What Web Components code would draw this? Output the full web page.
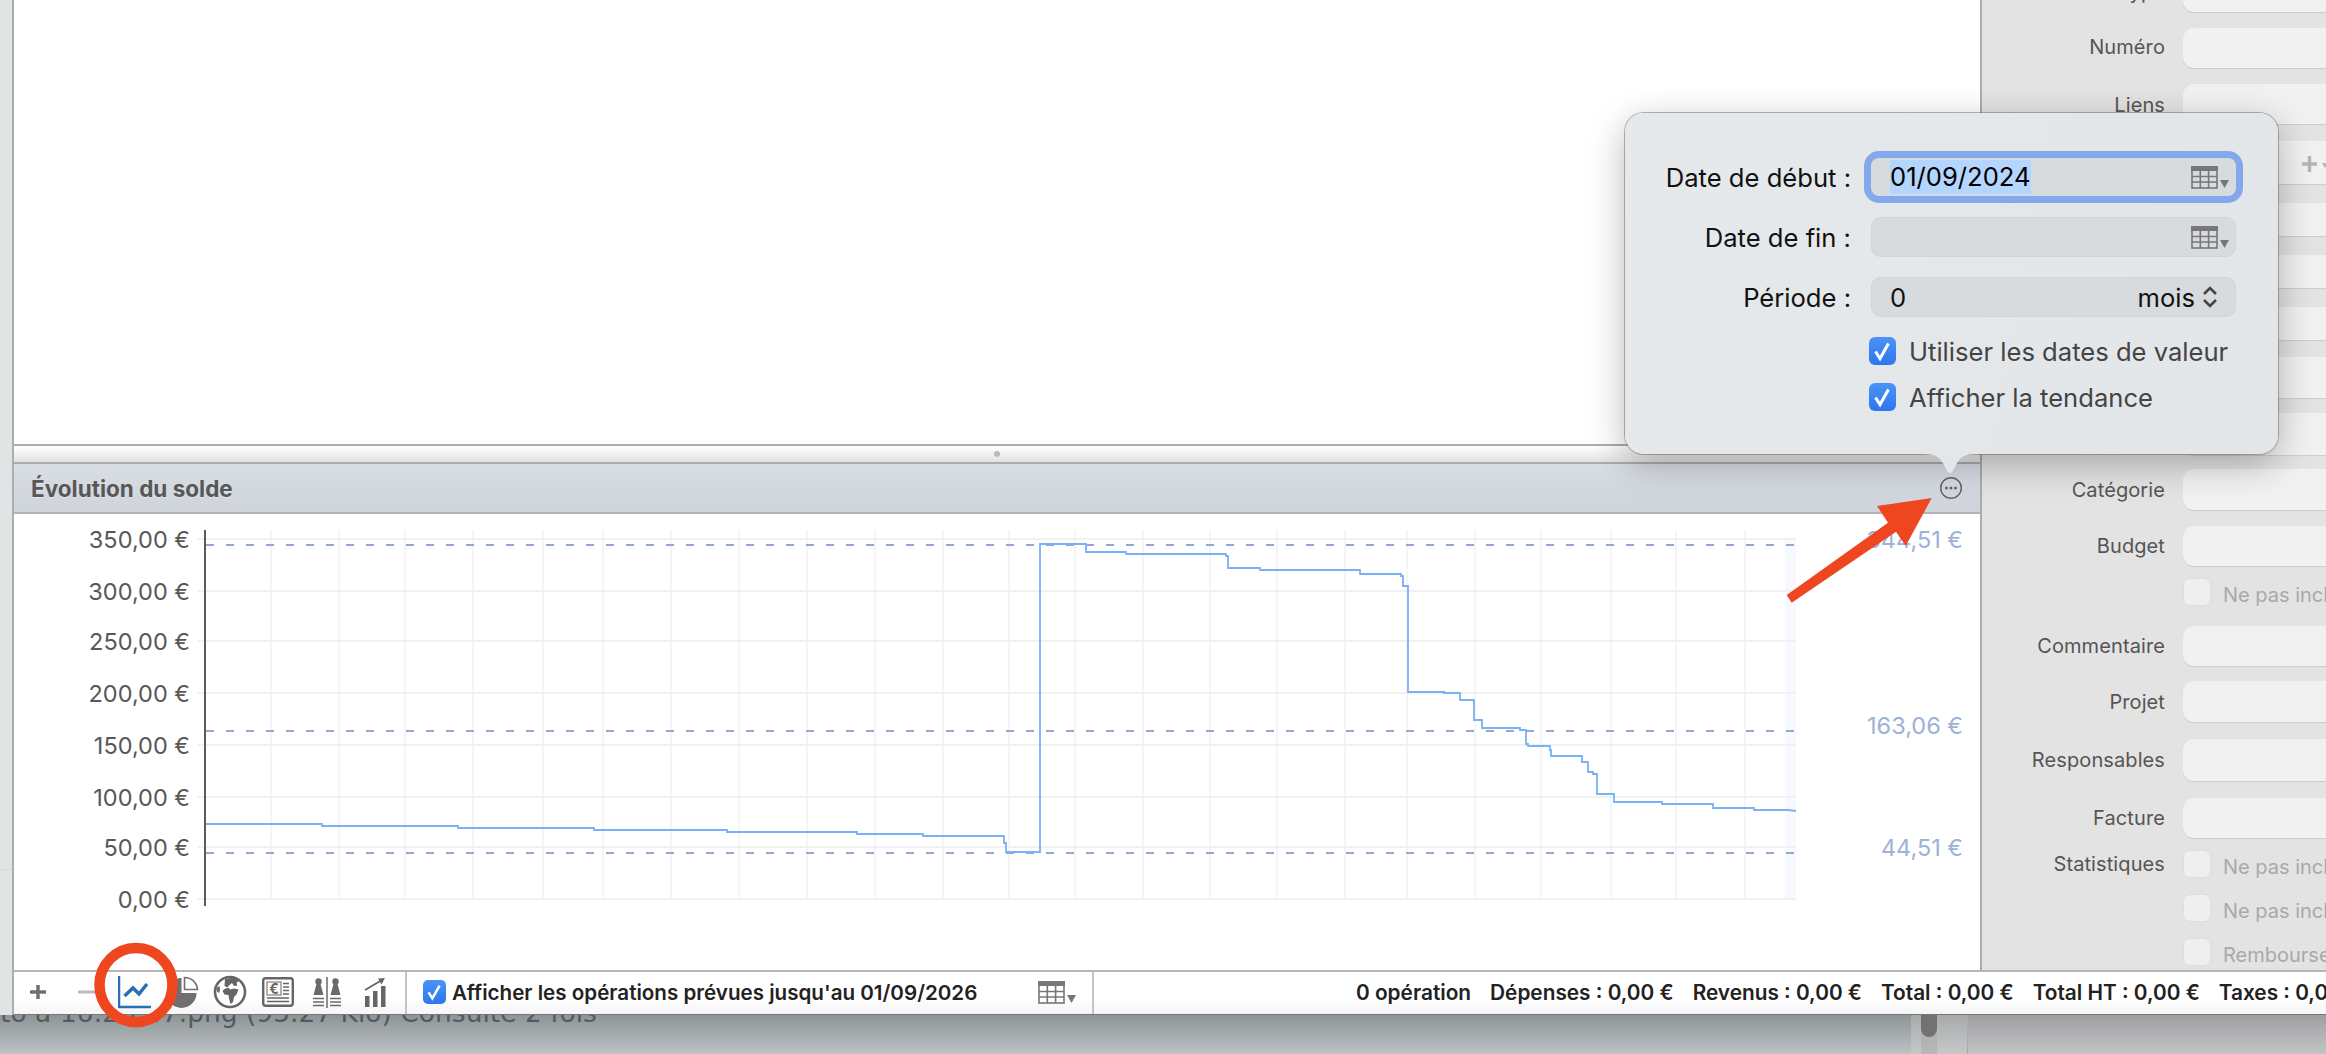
<!DOCTYPE html>
<html lang="fr">
<head>
<meta charset="utf-8">
<title>Évolution du solde</title>
<style>
  html, body { margin: 0; height: 1054px; overflow: hidden; background: #a5a8ab; }
  body { position: relative; font-family: Inter, "Liberation Sans", sans-serif; }
</style>
</head>
<body>
<app-window>
  <side-panel slot="side"></side-panel>
  <balance-chart slot="chart"></balance-chart>
</app-window>
<desk-backdrop></desk-backdrop>
<balance-popover></balance-popover>
<red-marks></red-marks>

<script>
// small calendar button used in the popover and the status bar
class CalIcon extends HTMLElement {
  connectedCallback() {
    this.attachShadow({ mode: 'open' });
    this.shadowRoot.innerHTML = `
      <style>:host { display: inline-flex; } svg { display: block; }</style>
      <svg width="39" height="23" viewBox="0 0 39 23">
        <g fill="none" stroke="#777" stroke-width="1.6">
          <rect x="1" y="1" width="25" height="21"/>
          <path d="M9.300 5v17M17.600 5v17M1 10.500h25M1 16h25"/>
        </g>
        <rect x="0" y="0" width="27" height="5" fill="#777"/>
        <path d="M29 14h9l-4.500 8z" fill="#777"/>
      </svg>`;
  }
}
customElements.define('cal-icon', CalIcon);

class BlueCheck extends HTMLElement {
  connectedCallback() {
    this.attachShadow({ mode: 'open' });
    this.shadowRoot.innerHTML = `
      <style>
        :host { display: block; width: 27px; height: 28px; border-radius: 6px; background: linear-gradient(#4b93f7, #2e76ee); }
        svg { display: block; width: 100%; height: 100%; }
      </style>
      <svg viewBox="0 0 27 28"><path d="M6.500 14.500l4.500 7L19.500 6.500" fill="none" stroke="#fff" stroke-width="3"/></svg>`;
  }
}
customElements.define('blue-check', BlueCheck);

// right column of the window: label + field rows
class SideRow extends HTMLElement {
  connectedCallback() {
    this.attachShadow({ mode: 'open' });
    const label = this.getAttribute('label') || '';
    const h = this.getAttribute('h') || 40;
    const gap = this.getAttribute('gap') || 0;
    const nudge = Number(this.getAttribute('nudge') || 0);
    const check = this.getAttribute('check');
    const right = check !== null
      ? `<div class="chk"><i></i><span>${check}</span></div>`
      : `<div class="field" style="height:${h}px"><slot></slot></div>`;
    this.shadowRoot.innerHTML = `
      <style>
        :host { display: grid; grid-template-columns: 183px 200px; column-gap: 18px; align-items: center; margin-top: ${gap}px; }
        .lab { text-align: right; font-size: 20px; letter-spacing: .1px; color: #555; white-space: nowrap; padding-top: ${Math.max(nudge, 0) * 2}px; padding-bottom: ${Math.max(-nudge, 0) * 2}px; }
        .field { background: #f1f1f1; border-radius: 11px; box-shadow: 0 1px 1px rgba(0,0,0,.1); display: flex; align-items: flex-start; }
        .chk { display: flex; align-items: center; gap: 13px; height: 27px; margin-left: 1px; white-space: nowrap; font-size: 20px; color: #a9a9a9; }
        .chk i { flex: none; width: 26px; height: 26px; border-radius: 6px; background: #efefef; box-shadow: 0 0 0 1px #dedede; }
        .chk span { padding-top: 6px; }
      </style>
      <div class="lab">${label}</div>
      ${right}`;
  }
}
customElements.define('side-row', SideRow);

class SidePanel extends HTMLElement {
  connectedCallback() {
    this.attachShadow({ mode: 'open' });
    this.shadowRoot.innerHTML = `
      <style>
        :host { display: block; height: 100%; overflow: hidden; background: #e3e3e3; border-left: 2px solid #acacac; box-sizing: border-box; }
        .rows { margin-top: -28px; }
        svg { display: block; margin: 15px 0 0 119px; }
      </style>
      <div class="rows">
        <side-row label="Type"></side-row>
        <side-row label="Numéro" gap="16" nudge="-1"></side-row>
        <side-row label="Liens" gap="16" nudge="1"></side-row>
        <side-row gap="17" h="43"><svg width="26" height="16" viewBox="0 0 26 16" fill="#b5b5b5"><path d="M0 6.300h15v3.400H0zM5.800 0h3.400v16H5.800z"/><path d="M20 7h6l-3 5z"/></svg></side-row>
        <side-row gap="19" h="33"></side-row>
        <side-row gap="19" h="33"></side-row>
        <side-row gap="19" h="33"></side-row>
        <side-row gap="17" h="41"></side-row>
        <side-row gap="15" h="42"></side-row>
        <side-row label="Catégorie" gap="14" h="41"></side-row>
        <side-row label="Budget" gap="16"></side-row>
        <side-row gap="12" check="Ne pas inclure"></side-row>
        <side-row label="Commentaire" gap="21"></side-row>
        <side-row label="Projet" gap="15" h="41"></side-row>
        <side-row label="Responsables" gap="17" h="42"></side-row>
        <side-row label="Facture" gap="17"></side-row>
        <side-row label="Statistiques" gap="12" check="Ne pas inclure"></side-row>
        <side-row gap="17" check="Ne pas inclure"></side-row>
        <side-row gap="17" check="Remboursement"></side-row>
      </div>`;
  }
}
customElements.define('side-panel', SidePanel);

class BalanceChart extends HTMLElement {
  connectedCallback() {
    this.attachShadow({ mode: 'open' });
    const ticks = ['350,00 €', '300,00 €', '250,00 €', '200,00 €', '150,00 €', '100,00 €', '50,00 €', '0,00 €'];
    const gridY = [25, 77, 127, 179, 231, 283, 333, 385];
    const gridX = [271, 339, 405, 473, 543, 603, 671, 739, 807, 875, 943, 1009, 1075, 1143, 1210, 1277, 1345, 1407, 1475, 1541, 1611, 1676, 1745];
    const dashes = [[31, '344,51 €', 33], [217, '163,06 €', 219], [339, '44,51 €', 341]];
    // the balance line, in page x and chart y (page y - 514)
    const pts = [[206,310],[322,310],[322,312],[458,312],[458,314],[594,314],[594,316],[727,316],[727,318],[857,318],[857,320],[923,320],[923,322],[1004,322],[1004,329],[1006,329],[1006,338],[1040,338],[1040,30],[1086,30],[1086,38],[1126,38],[1126,40],[1226,40],[1226,42],[1228,42],[1228,54],[1260,54],[1260,56],[1360,56],[1360,60],[1401,60],[1401,62],[1403,62],[1403,72],[1408,72],[1408,178],[1444,178],[1444,179],[1460,179],[1460,186],[1474,186],[1474,206],[1482,206],[1482,214],[1520,214],[1520,216],[1526,216],[1526,230],[1528,230],[1528,232],[1550,232],[1550,236],[1551,236],[1551,242],[1582,242],[1582,248],[1588,248],[1588,258],[1593,258],[1593,260],[1597,260],[1597,280],[1614,280],[1614,288],[1662,288],[1662,290],[1713,290],[1713,294],[1754,294],[1754,296],[1788,296],[1796,297]];
    this.shadowRoot.innerHTML = `
      <style>
        :host { display: block; height: 456px; background: #fff; }
        svg { display: block; }
        text { font-family: Inter, "Liberation Sans", sans-serif; font-size: 23.500px; }
      </style>
      <svg width="1966" height="456" viewBox="14 0 1966 456">
        <rect x="1785" y="25" width="11" height="360" fill="#f8f9fe"/>
        <g stroke="#f2f2f2" stroke-width="1.500" fill="none">
          ${gridX.map(x => `<path d="M${x} 16V385"/>`).join('')}
        </g>
        <g stroke="#f1f1f1" stroke-width="2" fill="none">
          ${gridY.map(y => `<path d="M198 ${y}H1796"/>`).join('')}
        </g>
        <g fill="#585858" text-anchor="end">
          ${ticks.map((t, i) => `<text x="190" y="${gridY[i] + 9}">${t}</text>`).join('')}
        </g>
        <path d="M205 16V392" stroke="#5a5a5a" stroke-width="2" fill="none"/>
        ${dashes.map(d => `<path d="M206 ${d[0]}H1796" stroke="#93a8d0" stroke-width="2" stroke-dasharray="8 12" fill="none"/>`).join('')}
        <polyline points="${pts.map(p => p.join(',')).join(' ')}" fill="none" stroke="#79b1f7" stroke-width="1.800"/>
        <g fill="#9cb2d6" text-anchor="end">
          ${dashes.map(d => `<text x="1963" y="${d[2] + 1}">${d[1]}</text>`).join('')}
        </g>
      </svg>`;
  }
}
customElements.define('balance-chart', BalanceChart);

class StatusBar extends HTMLElement {
  connectedCallback() {
    this.attachShadow({ mode: 'open' });
    this.shadowRoot.innerHTML = `
      <style>
        :host { display: flex; align-items: stretch; height: 45px; box-sizing: border-box; background: linear-gradient(#fff 60%, #f5f5f5); border-top: 2px solid #b6b6b6; border-bottom: 1px solid #777; overflow: hidden; color: #222; font-size: 20.800px; font-weight: 600; white-space: nowrap; }
        svg { display: block; flex: none; }
        .tools { width: 391px; flex: none; display: flex; align-items: center; padding-bottom: 2px; box-sizing: border-box; }
        .sep { flex: none; width: 2px; background: #c4c4c4; }
        .plan { width: 685px; flex: none; display: flex; align-items: center; box-sizing: border-box; padding: 0 0 2px 16px; }
        .plan span { margin-left: 6px; width: 529px; flex: none; font-size: 20.600px; }
        .plan cal-icon { margin-left: 57px; }
        .plan blue-check { width: 23px; height: 24px; flex: none; border-radius: 5px; }
        .sum { display: flex; align-items: center; gap: 19px; padding: 0 0 2px 262px; }
      </style>
      <div class="tools">
        <svg style="margin-left:16px" width="16" height="14" viewBox="0 0 16 14"><path d="M0 7h16M8 0v14" stroke="#707070" stroke-width="3.500"/></svg>
        <svg style="margin-left:32px" width="18" height="4" viewBox="0 0 18 4"><path d="M0 2h18" stroke="#bbb" stroke-width="3"/></svg>
        <svg style="margin-left:22px" width="33" height="33" viewBox="0 0 33 33" fill="none" stroke="#2a6db5"><path d="M1 0V31H33" stroke-width="2.500"/><path d="M6.500 20L15 12l6 6L29 8" stroke-width="3.500"/></svg>
        <svg style="margin-left:15px" width="34" height="33" viewBox="0 0 34 33"><path d="M15.500 2A15 15 0 1 0 30.500 17H15.500Z" fill="#6f6f6f"/><path d="M18.500 1.500V13.500H31.500A13 13 0 0 0 18.500 1.500Z" fill="#fff" stroke="#6f6f6f" stroke-width="1.600"/></svg>
        <svg style="margin-left:13px" width="34" height="34" viewBox="0 0 34 34"><circle cx="17" cy="17" r="15" fill="#fff" stroke="#666" stroke-width="2.600"/><path d="M12 4l9-1.500 5 3-2.500 2.500 1 2.500-3.500.500-2-3-3 2.500-1.500 2-3-1.500zM9.500 16c1-2 4-3.500 6-3l2 1.500 3-1 5 1-2 5-2.500 2.500-1 5-2.500 2-1.500-5.500-.500-3.500-4-.500zM3.500 13l3-2 .500 4-1 3-2-1.500z" fill="#666"/></svg>
        <svg style="margin-left:15px" width="32" height="30" viewBox="0 0 32 30"><rect x="1.200" y="1.200" width="29.600" height="27.600" rx="2.500" fill="none" stroke="#666" stroke-width="2.400"/><rect x="5" y="5" width="14" height="13" fill="none" stroke="#666" stroke-width="1"/><text x="12" y="16.500" text-anchor="middle" font-size="14" font-weight="700" fill="#666" font-family="Inter, sans-serif">€</text><path d="M21 6.500h6M21 10h6M21 13.500h6M21 17h6M5 21h22M5 24.500h22" stroke="#666" stroke-width="1.600"/></svg>
        <svg style="margin-left:18px" width="30" height="31" viewBox="0 0 30 31"><circle cx="6.500" cy="4.500" r="3.200" fill="#6a6a6a"/><path d="M4.500 7h4L11.500 18h-10zM21.500 7h4L28.500 18h-10z" fill="#6a6a6a"/><circle cx="23.500" cy="4.500" r="3.200" fill="#6a6a6a"/><path d="M15 0v31" stroke="#6a6a6a" stroke-width="1.500"/><path d="M1 21.500h11M1 25h11M1 28.500h11M18 21.500h11M18 25h11M18 28.500h11" stroke="#6a6a6a" stroke-width="1.500"/></svg>
        <svg style="margin-left:22px" width="22" height="30" viewBox="0 0 22 30"><path d="M1 19h4.500v11H1zM9 14h4.500v16H9zM17 9h4.500v21H17z" fill="#666"/><path d="M1 13L18 3" stroke="#666" stroke-width="1.800"/><path d="M21 1l-7 .500 3.500 6z" fill="#666"/></svg>
      </div>
      <div class="sep"></div>
      <div class="plan">
        <blue-check></blue-check>
        <span>Afficher les opérations prévues jusqu'au 01/09/2026</span>
        <cal-icon></cal-icon>
      </div>
      <div class="sep"></div>
      <div class="sum">
        <span>0 opération</span><span>Dépenses : 0,00 €</span><span>Revenus : 0,00 €</span><span>Total : 0,00 €</span><span>Total HT : 0,00 €</span><span>Taxes : 0,00 €</span>
      </div>`;
  }
}
customElements.define('status-bar', StatusBar);

class AppWindow extends HTMLElement {
  connectedCallback() {
    this.attachShadow({ mode: 'open' });
    this.shadowRoot.innerHTML = `
      <style>
        :host { display: grid; grid-template-columns: 14px 1fr; height: 1015px; position: relative; z-index: 1; overflow: hidden; }
        .strip { background: linear-gradient(#e0e4e4 869px, #d6d9d9 869px, #d6d9d9 870px, #e0e4e4 870px); border-right: 2px solid #adadad; box-sizing: border-box; }
        .right { display: flex; flex-direction: column; min-width: 0; }
        .upper { display: grid; grid-template-columns: 1966px 1fr; height: 970px; }
        .main { display: flex; flex-direction: column; min-width: 0; }
        .sheet { height: 444px; background: #fff; }
        .split { height: 16px; display: flex; align-items: center; justify-content: center; border-top: 2px solid #acacac; border-bottom: 2px solid #acacac; background: linear-gradient(#fff, #e2e2e2); }
        .split i { width: 6px; height: 6px; border-radius: 50%; background: #bbb; }
        .head { height: 48px; display: flex; align-items: center; justify-content: space-between; padding: 0 17px; border-bottom: 2px solid #b1b4b7; background: linear-gradient(#d9dee5, #cfd4db); }
        .head b { font-size: 22.500px; font-weight: 700; color: #575757; text-shadow: 0 1px 0 rgba(255,255,255,.4); }
        svg { display: block; }
      </style>
      <div class="strip"></div>
      <div class="right">
        <div class="upper">
          <div class="main">
            <div class="sheet"></div>
            <div class="split"><i></i></div>
            <div class="head">
              <b>Évolution du solde</b>
              <svg width="24" height="24" viewBox="0 0 24 24"><circle cx="12" cy="12" r="10.300" fill="none" stroke="#666" stroke-width="1.500"/><circle cx="7.500" cy="12" r="1.500" fill="#666"/><circle cx="12" cy="12" r="1.500" fill="#666"/><circle cx="16.500" cy="12" r="1.500" fill="#666"/></svg>
            </div>
            <slot name="chart"></slot>
          </div>
          <slot name="side"></slot>
        </div>
        <status-bar></status-bar>
      </div>`;
  }
}
customElements.define('app-window', AppWindow);

// what shows of the browser and desktop under the window
class DeskBackdrop extends HTMLElement {
  connectedCallback() {
    this.attachShadow({ mode: 'open' });
    this.shadowRoot.innerHTML = `
      <style>
        :host { display: grid; grid-template-columns: 1911px 56px 1fr; height: 56px; margin-top: -17px; overflow: hidden; }
        .page { background: linear-gradient(#8f9497 17px, #bcc2c5); overflow: hidden; }
        .page div { white-space: nowrap; font: 26.500px/30px "DejaVu Sans", sans-serif; color: #555a5e; }
        .scroll { background: linear-gradient(#a9aaab 17px, #c6c7c8); display: flex; padding-left: 10px; }
        .track { width: 16px; background: linear-gradient(#a5a5a5, #b7b7b7); }
        .track i { display: block; width: 16px; height: 39px; border-radius: 0 0 8px 8px; background: #727272; }
        .rest { border-left: 1px solid #a9acae; background: linear-gradient(#9f9fa1 17px, #c3c4c6); }
      </style>
      <div class="page"><div>to à 16:20:47.png (95.27 Kio) Consulté 2 fois</div></div>
      <div class="scroll"><div class="track"><i></i></div></div>
      <div class="rest"></div>`;
  }
}
customElements.define('desk-backdrop', DeskBackdrop);

class BalancePopover extends HTMLElement {
  connectedCallback() {
    this.attachShadow({ mode: 'open' });
    this.shadowRoot.innerHTML = `
      <style>
        :host { position: absolute; left: 1625px; top: 113px; width: 653px; height: 341px; box-sizing: border-box; z-index: 2; background: linear-gradient(100deg, #e6e9ec, #e3e6e9); border-radius: 19px; box-shadow: 0 0 0 1px rgba(90,90,90,.45), 0 10px 36px rgba(0,0,0,.28); color: #111; font-size: 25.600px; }
        .form { display: grid; grid-template-columns: 226px 365px; column-gap: 20px; row-gap: 20px; padding-top: 44px; align-items: center; }
        .lab { text-align: right; white-space: nowrap; }
        .box { height: 40px; box-sizing: border-box; border-radius: 10px; background: #d8dbde; box-shadow: inset 0 0 0 1px #d2d5d8; display: flex; align-items: center; padding: 0 6px 0 19px; }
        .box.focus { height: 38px; box-shadow: 0 0 0 7px #83a8ec; border-radius: 8px; margin: 1px 0; }
        .sel { background: #b4d5fe; color: #000; line-height: 34px; }
        .grow { flex: 1; }
        .checks { grid-column: 2; display: flex; flex-direction: column; gap: 18px; margin: 0 0 0 -2px; color: #444; }
        .checks div { display: flex; align-items: center; gap: 13px; height: 28px; white-space: nowrap; }
        .tip { position: absolute; left: 297px; top: 340px; display: block; }
        .mois { margin-right: 7px; }
      </style>
      <div class="form">
        <div class="lab">Date de début :</div>
        <div class="box focus"><span class="sel">01/09/2024</span><span class="grow"></span><cal-icon></cal-icon></div>
        <div class="lab">Date de fin :</div>
        <div class="box"><span class="grow"></span><cal-icon></cal-icon></div>
        <div class="lab">Période :</div>
        <div class="box"><span>0</span><span class="grow"></span><span class="mois">mois</span>
          <svg width="16" height="24" viewBox="0 0 16 24" style="margin-right:12px" fill="none" stroke="#444" stroke-width="2.600"><path d="M2 9l6-6 6 6M2 15l6 6 6-6"/></svg></div>
        <div class="checks">
          <div><blue-check></blue-check>Utiliser les dates de valeur</div>
          <div><blue-check></blue-check>Afficher la tendance</div>
        </div>
      </div>
      <svg class="tip" width="56" height="22" viewBox="0 0 56 22"><path d="M0 1C14 1 18 4 22 12c3 6 4 8 6 8s3-2 6-8C38 4 42 1 56 1Z" fill="#e4e7ea"/></svg>`;
  }
}
customElements.define('balance-popover', BalancePopover);

// red annotations drawn on top of the screenshot
class RedMarks extends HTMLElement {
  connectedCallback() {
    this.attachShadow({ mode: 'open' });
    this.shadowRoot.innerHTML = `
      <style>:host { position: absolute; left: 0; top: 0; z-index: 3; pointer-events: none; } svg { display: block; }</style>
      <svg width="2326" height="1054" viewBox="0 0 2326 1054">
        <ellipse cx="136" cy="985" rx="36.500" ry="37" fill="none" stroke="#ee4720" stroke-width="10.500"/>
        <path d="M1786.700 595L1888 522.700 1877 506 1931.700 498 1905.700 546 1896 531.700 1791.700 602.700Z" fill="#ee4720"/>
      </svg>`;
  }
}
customElements.define('red-marks', RedMarks);
</script>
</body>
</html>
